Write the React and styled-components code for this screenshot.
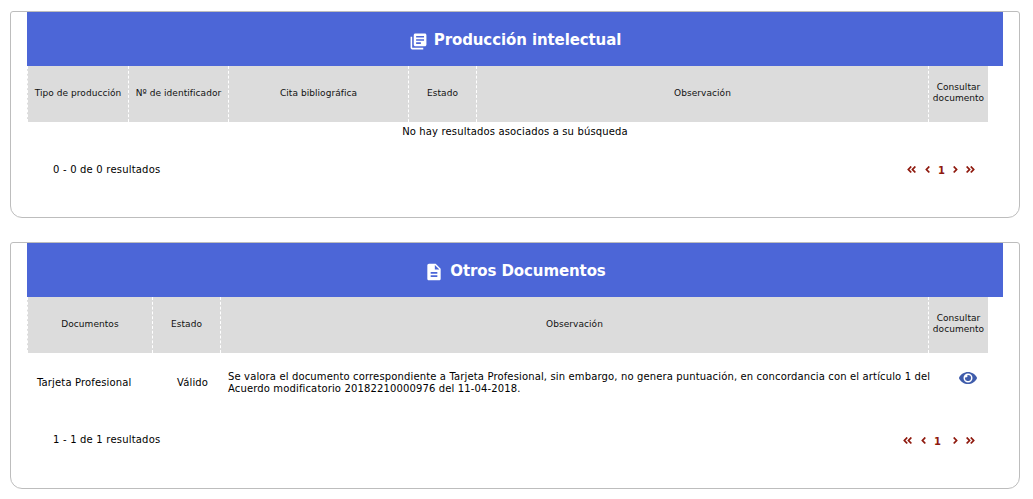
import React from "react";
import styled, { createGlobalStyle } from "styled-components";
import { MdLibraryBooks, MdDescription } from "react-icons/md";
import {
  FaEye,
  FaAngleDoubleLeft,
  FaAngleDoubleRight,
  FaAngleLeft,
  FaAngleRight,
} from "react-icons/fa";

const GlobalStyle = createGlobalStyle`
  body {
    margin: 0;
    background: #fff;
    font-family: "DejaVu Sans", Verdana, sans-serif;
    color: #000;
  }
`;

const Page = styled.div`
  width: 1010px;
  margin-left: 10px;
  padding-top: 11px;
  display: flex;
  flex-direction: column;
  gap: 24px;
`;

const Card = styled.section`
  box-sizing: border-box;
  height: ${(p) => p.$height}px;
  padding: 0 16px;
  border: 1px solid #bdbdbd;
  border-radius: 3px 3px 12px 12px;
  background: #fff;
`;

const Banner = styled.h2`
  box-sizing: border-box;
  margin: 0;
  width: 976px;
  height: 54px;
  padding-top: 2px;
  display: flex;
  align-items: center;
  justify-content: center;
  gap: 6px;
  background: #4c66d7;
  color: #fff;
  font-size: 15px;
  font-weight: bold;
  letter-spacing: -0.1px;
  svg {
    font-size: ${(p) => p.$iconSize}px;
    margin-top: 2px;
  }
`;

const Table = styled.div`
  width: 961px;
  display: grid;
  grid-template-columns: ${(p) => p.$columns};
`;

const Head = styled.div`
  box-sizing: border-box;
  height: 56px;
  padding: 0 2px 2px;
  display: flex;
  align-items: center;
  justify-content: center;
  text-align: center;
  background: #dcdcdc;
  border-left: 1px dashed #fff;
  font-size: 9px;
  line-height: 11px;
  letter-spacing: 0.05px;
  color: #111;
`;

const Empty = styled.div`
  width: 976px;
  height: 19px;
  display: flex;
  align-items: center;
  justify-content: center;
  font-size: 10px;
  letter-spacing: 0.15px;
`;

const Cell = styled.div`
  box-sizing: border-box;
  height: 60px;
  display: flex;
  align-items: center;
  padding-left: ${(p) => p.$indent}px;
  font-size: 10px;
  line-height: 12px;
  letter-spacing: 0.14px;
`;

const ObservationCell = styled(Cell)`
  margin-right: -6px;
`;

const EyeIcon = styled(FaEye)`
  color: #3f5cab;
  font-size: 18px;
  margin-bottom: 11px;
`;

const Footer = styled.div`
  width: 961px;
  height: ${(p) => p.$height}px;
  display: flex;
  align-items: center;
  justify-content: space-between;
  padding-left: 26px;
  box-sizing: border-box;
`;

const Count = styled.span`
  font-size: 10px;
  letter-spacing: 0.2px;
`;

const Pager = styled.div`
  display: flex;
  align-items: center;
  gap: 4px;
  margin-top: ${(p) => p.$drop}px;
  padding-right: 12px;
  color: #8f1a0e;
  font-size: 11px;
`;

const FirstPage = styled(FaAngleDoubleLeft)`
  margin-right: 1px;
`;

const PageNumber = styled.span`
  margin-left: 1px;
  margin-right: ${(p) => p.$after}px;
  padding-top: 3px;
  font-size: 10px;
  font-weight: bold;
`;

const Pagination = ({ after, drop }) => (
  <Pager $drop={drop}>
    <FirstPage />
    <FaAngleLeft />
    <PageNumber $after={after}>1</PageNumber>
    <FaAngleRight />
    <FaAngleDoubleRight />
  </Pager>
);

const App = () => (
  <>
    <GlobalStyle />
    <Page>
      <Card $height={207}>
        <Banner $iconSize={19}>
          <MdLibraryBooks />
          Producción intelectual
        </Banner>
        <Table $columns="101px 100px 180px 68px 452px 60px">
          <Head>Tipo de producción</Head>
          <Head>Nº de identificador</Head>
          <Head>Cita bibliográfica</Head>
          <Head>Estado</Head>
          <Head>Observación</Head>
          <Head>Consultar documento</Head>
        </Table>
        <Empty>No hay resultados asociados a su búsqueda</Empty>
        <Footer $height={56}>
          <Count>0 - 0 de 0 resultados</Count>
          <Pagination after={1} drop={0} />
        </Footer>
      </Card>
      <Card $height={247}>
        <Banner $iconSize={20}>
          <MdDescription />
          Otros Documentos
        </Banner>
        <Table $columns="125px 68px 708px 60px">
          <Head>Documentos</Head>
          <Head>Estado</Head>
          <Head>Observación</Head>
          <Head>Consultar documento</Head>
          <Cell $indent={10}>Tarjeta Profesional</Cell>
          <Cell $indent={25}>Válido</Cell>
          <ObservationCell $indent={8}>
            Se valora el documento correspondiente a Tarjeta Profesional, sin embargo, no genera puntuación, en concordancia con el artículo 1 del Acuerdo modificatorio 20182210000976 del 11-04-2018.
          </ObservationCell>
          <Cell $indent={31}>
            <EyeIcon />
          </Cell>
        </Table>
        <Footer $height={52}>
          <Count>1 - 1 de 1 resultados</Count>
          <Pagination after={5} drop={2} />
        </Footer>
      </Card>
    </Page>
  </>
);

export default App;
